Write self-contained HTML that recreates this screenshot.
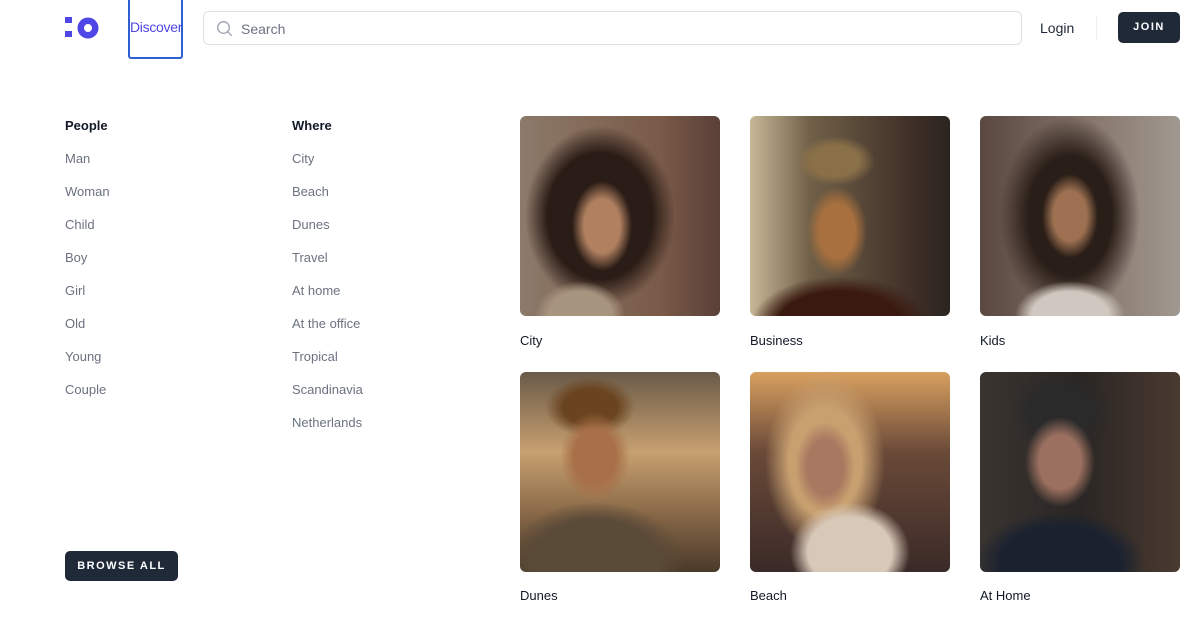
<!DOCTYPE html>
<html><head><meta charset="utf-8"><style>
*{margin:0;padding:0;box-sizing:border-box}
body{width:1200px;height:636px;background:#fff;font-family:"Liberation Sans",sans-serif;position:relative;overflow:hidden;color:#1f2937}
.abs{position:absolute}
.disc{left:128px;top:-2px;width:55px;height:61px;border:2px solid #2f5fd0;border-top:none;border-radius:0 0 3px 3px;color:#4f46e5;font-size:14px;line-height:58px;text-align:center;letter-spacing:-0.3px}
.search{left:203px;top:11px;width:819px;height:34px;border:1px solid #dcdfe4;border-radius:6px}
.search span{position:absolute;left:37px;top:9px;font-size:14px;color:#6b7280}
.login{left:1040px;top:20px;font-size:14px;color:#1f2937}
.sep{left:1096px;top:16px;width:1px;height:24px;background:#eee}
.join{left:1118px;top:12px;width:62px;height:31px;background:#1f2937;color:#fff;border-radius:5px;font-size:11px;font-weight:bold;letter-spacing:1.5px;text-align:center;line-height:31px}
.h{font-size:13px;font-weight:bold;color:#111827}
.l{font-size:13px;color:#6b7280}
.browse{left:65px;top:551px;width:113px;height:30px;background:#1f2937;color:#fff;border-radius:5px;font-size:11px;font-weight:bold;letter-spacing:1.5px;text-align:center;line-height:30px}
.img{width:200px;height:200px;border-radius:6px;overflow:hidden}
.cap{font-size:13px;color:#111827}
</style></head><body>
<svg class="abs" style="left:64px;top:16px" width="36" height="24" viewBox="0 0 36 24"><rect x="1" y="1" width="7" height="6" fill="#4f46e5"/><rect x="1" y="15" width="7" height="6" fill="#4f46e5"/><circle cx="24" cy="12" r="10.5" fill="#4f46e5"/><circle cx="24" cy="12" r="4" fill="#fff"/></svg>
<div class="abs disc">Discover</div>
<div class="abs search"><svg class="abs" style="left:12px;top:8px" width="18" height="18" viewBox="0 0 18 18" fill="none" stroke="#9ca3af" stroke-width="1.3"><circle cx="7.5" cy="7.5" r="5.8"/><path d="M11.8 11.8l4 4"/></svg><span>Search</span></div>
<div class="abs login">Login</div>
<div class="abs sep"></div>
<div class="abs join">JOIN</div>

<div class="abs h" style="left:65px;top:118px">People</div>
<div class="abs l" style="left:65px;top:151px">Man</div>
<div class="abs l" style="left:65px;top:184px">Woman</div>
<div class="abs l" style="left:65px;top:217px">Child</div>
<div class="abs l" style="left:65px;top:250px">Boy</div>
<div class="abs l" style="left:65px;top:283px">Girl</div>
<div class="abs l" style="left:65px;top:316px">Old</div>
<div class="abs l" style="left:65px;top:349px">Young</div>
<div class="abs l" style="left:65px;top:382px">Couple</div>

<div class="abs h" style="left:292px;top:118px">Where</div>
<div class="abs l" style="left:292px;top:151px">City</div>
<div class="abs l" style="left:292px;top:184px">Beach</div>
<div class="abs l" style="left:292px;top:217px">Dunes</div>
<div class="abs l" style="left:292px;top:250px">Travel</div>
<div class="abs l" style="left:292px;top:283px">At home</div>
<div class="abs l" style="left:292px;top:316px">At the office</div>
<div class="abs l" style="left:292px;top:349px">Tropical</div>
<div class="abs l" style="left:292px;top:382px">Scandinavia</div>
<div class="abs l" style="left:292px;top:415px">Netherlands</div>

<div class="abs browse">BROWSE ALL</div>

<div class="abs img" style="left:520px;top:116px;background:radial-gradient(ellipse 30px 45px at 82px 110px,#b08060 60%,transparent 100%),radial-gradient(ellipse 45px 35px at 60px 200px,#a89580 70%,transparent 100%),radial-gradient(ellipse 75px 90px at 80px 100px,#2a1c16 70%,transparent 100%),linear-gradient(90deg,#8c7a6a,#7a5a48 70%,#5a4038)"></div>
<div class="abs img" style="left:750px;top:116px;background:radial-gradient(ellipse 30px 45px at 87px 115px,#a8703e 60%,transparent 100%),radial-gradient(ellipse 40px 25px at 85px 45px,#8a7048 60%,transparent 100%),radial-gradient(ellipse 90px 50px at 90px 210px,#3a1a10 70%,transparent 100%),linear-gradient(90deg,#c8b898,#706048 30%,#403028 80%,#2a2420)"></div>
<div class="abs img" style="left:980px;top:116px;background:radial-gradient(ellipse 28px 42px at 90px 100px,#9c7050 60%,transparent 100%),radial-gradient(ellipse 55px 35px at 90px 200px,#d0c8c0 70%,transparent 100%),radial-gradient(ellipse 70px 100px at 90px 100px,#2a1e18 60%,transparent 100%),linear-gradient(90deg,#5a4840,#8a7a70 60%,#a09890)"></div>
<div class="abs img" style="left:520px;top:372px;background:radial-gradient(ellipse 35px 45px at 75px 85px,#a87048 60%,transparent 100%),radial-gradient(ellipse 45px 30px at 70px 35px,#6a4420 60%,transparent 100%),radial-gradient(ellipse 90px 60px at 75px 190px,#5a4a38 70%,transparent 100%),linear-gradient(180deg,#6a5a48,#c8a070 40%,#8a6a48 70%,#4a3a2a)"></div>
<div class="abs img" style="left:750px;top:372px;background:radial-gradient(ellipse 30px 45px at 75px 95px,#a87860 60%,transparent 100%),radial-gradient(ellipse 60px 50px at 100px 180px,#d8c8b8 70%,transparent 100%),radial-gradient(ellipse 60px 90px at 75px 90px,#c8a070 60%,transparent 100%),linear-gradient(180deg,#d8a060,#6a4a38 40%,#3a2a28)"></div>
<div class="abs img" style="left:980px;top:372px;background:radial-gradient(ellipse 35px 45px at 80px 90px,#9c7060 60%,transparent 100%),radial-gradient(ellipse 50px 40px at 80px 40px,#2a2a2a 60%,transparent 100%),radial-gradient(ellipse 85px 50px at 80px 190px,#1a2230 70%,transparent 100%),linear-gradient(90deg,#3a3430,#2a2624 50%,#4a3a30)"></div>

<div class="abs cap" style="left:520px;top:333px">City</div>
<div class="abs cap" style="left:750px;top:333px">Business</div>
<div class="abs cap" style="left:980px;top:333px">Kids</div>
<div class="abs cap" style="left:520px;top:588px">Dunes</div>
<div class="abs cap" style="left:750px;top:588px">Beach</div>
<div class="abs cap" style="left:980px;top:588px">At Home</div>
</body></html>
